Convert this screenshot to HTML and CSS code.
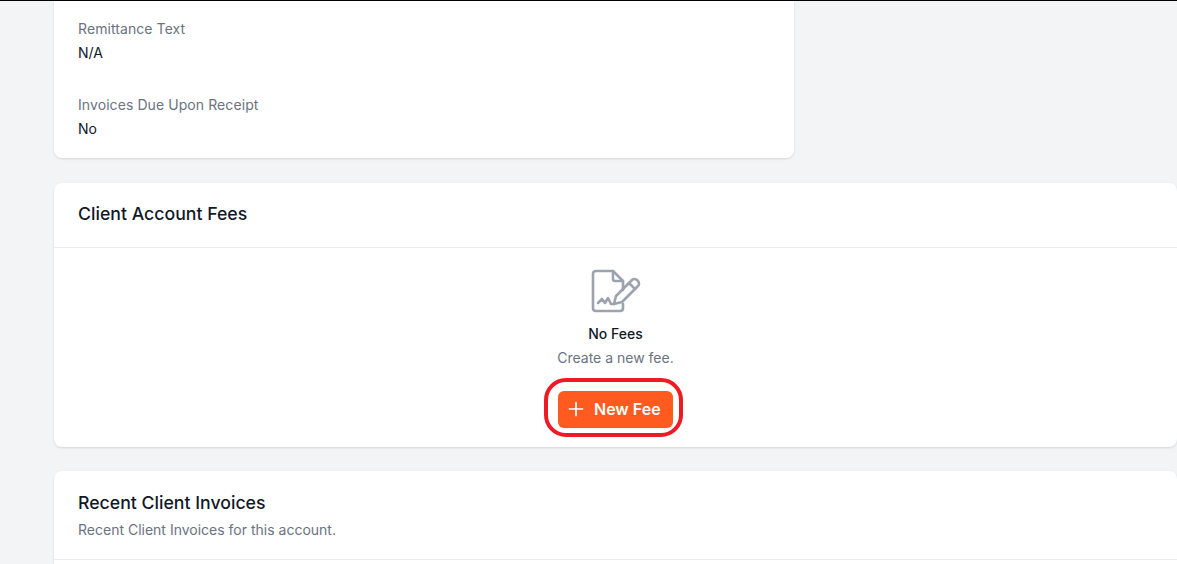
FILE: index.html
```html
<!DOCTYPE html>
<html lang="en">
<head>
  <meta charset="UTF-8" />
  <meta name="viewport" content="width=device-width, initial-scale=1.0"/>
  <title>Client Account</title>
  <link rel="stylesheet" href="styles.css">
</head>
<body>
<div class="page">

  <div class="card details-card">
    <div class="field">
      <div class="field-label">Remittance Text</div>
      <div class="field-value">N/A</div>
    </div>
    <div class="field">
      <div class="field-label">Invoices Due Upon Receipt</div>
      <div class="field-value">No</div>
    </div>
  </div>

  <div class="card">
    <div class="card-header">
      <h2>Client Account Fees</h2>
    </div>
    <div class="empty-state">
      <svg class="empty-icon" viewBox="0 0 50 44" width="50" height="44" fill="none" stroke="#9ca3af" stroke-width="2.6" stroke-linecap="round" stroke-linejoin="round">
        <path d="M32 21V12L22 2H5Q2 2 2 5V39Q2 42 5 42H29Q32 42 32 39V35"/>
        <path d="M22 2V10Q22 12 24 12H32"/>
        <path d="M7 34L11 30L14 34L17 29L20 35H23"/>
        <path d="M23 35L25 27L41 11Q43 9 46 11L47 12Q49 15 47 17L31 33Z"/>
        <path d="M38 14L44 20"/>
      </svg>
      <div class="empty-title">No Fees</div>
      <div class="empty-text">Create a new fee.</div>
      <div class="btn-wrap">
        <button class="new-btn">
          <svg viewBox="0 0 16 16" width="16" height="16" fill="none" stroke="#fff" stroke-width="1.7" stroke-linecap="round"><path d="M8 1.5V14.5M1.5 8H14.5"/></svg>
          New Fee
        </button>
        <span class="callout"></span>
      </div>
    </div>
  </div>

  <div class="card">
    <div class="card-header with-sub">
      <h2>Recent Client Invoices</h2>
      <p>Recent Client Invoices for this account.</p>
    </div>
    <div class="table-stub"></div>
  </div>

</div>
</body>
</html>
```

FILE: styles.css
```css
* { box-sizing: border-box; }
html, body {
  height: 100%;
  overflow: hidden;
}
body {
  margin: 0;
  font-family: Inter, "Liberation Sans", sans-serif;
  font-size: 14px;
  line-height: 20px;
  background: #f3f4f6;
  color: #111827;
  border-top: 1px solid #000;
}
.page {
  display: flex;
  flex-direction: column;
  align-items: flex-start;
  gap: 24px;
  padding-left: 54px;
}
.card {
  width: 100%;
  flex: none;
  background: #fff;
  border-radius: 8px;
  box-shadow: 0 1px 3px rgba(0,0,0,0.08), 0 1px 2px rgba(0,0,0,0.05);
}
.details-card {
  width: 740px;
  border-radius: 0 0 8px 8px;
  margin-bottom: 1px;
  padding: 18px 24px 19px;
  display: flex;
  flex-direction: column;
  gap: 32px;
}
.field-label {
  color: #6b7280;
  letter-spacing: 0.08px;
  margin-bottom: 4px;
}
.card-header {
  padding: 17px 24px;
  height: 65px;
  border-bottom: 1px solid #eaebee;
}
.card-header.with-sub {
  height: 89px;
  padding-top: 18px;
}
.card-header h2 {
  margin: 0;
  font-size: 17.7px;
  line-height: 28px;
  font-weight: 500;
}
.card-header p {
  margin: 3px 0 0;
  color: #6b7280;
}
.empty-state {
  display: flex;
  flex-direction: column;
  align-items: center;
  padding: 21px 0 19px;
}
.empty-icon {
  display: block;
  margin-bottom: 11px;
}
.empty-title {
  font-weight: 450;
}
.empty-text {
  color: #6b7280;
  margin-top: 4px;
}
.btn-wrap {
  position: relative;
  margin-top: 23px;
}
.new-btn {
  display: flex;
  align-items: center;
  gap: 10px;
  height: 37px;
  width: 115px;
  padding: 0 0 2px 10px;
  border: none;
  border-radius: 6px;
  background: #ff5a1f;
  color: #fff;
  font-family: inherit;
  font-size: 16px;
  font-weight: 600;
  box-shadow: 0 1px 2px rgba(0,0,0,0.05);
}
.callout {
  position: absolute;
  left: -14px;
  top: -13px;
  width: 139px;
  height: 59px;
  border: 4px solid #ed1c24;
  border-radius: 22px;
}
.table-stub {
  height: 40px;
}
```
